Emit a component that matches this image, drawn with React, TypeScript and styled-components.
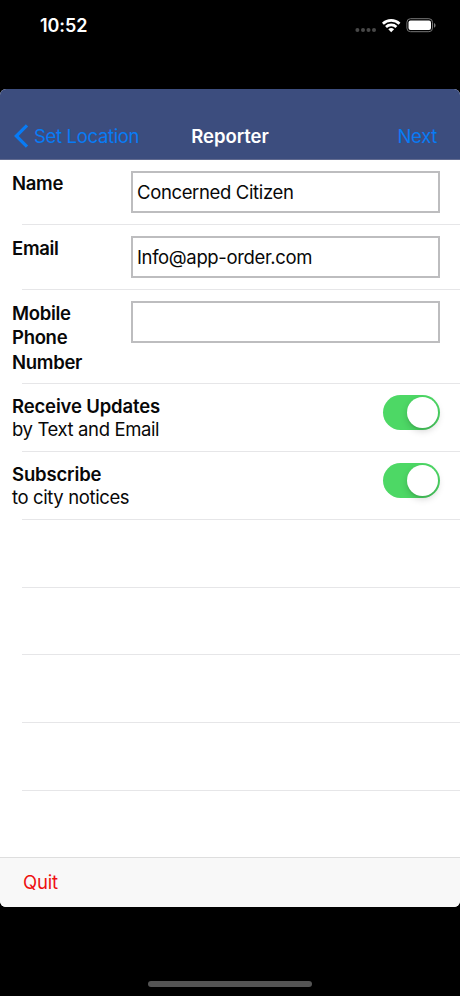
import React from "react";
import styled, { createGlobalStyle } from "styled-components";

const GlobalStyle = createGlobalStyle`
  * { box-sizing: border-box; }
  body {
    margin: 0;
    background: #000;
    font-family: Inter, "Liberation Sans", sans-serif;
    color: #080808;
  }
  button, input { font: inherit; color: inherit; padding: 0; margin: 0; border: 0; background: none; }
`;

const Screen = styled.div`
  height: 996px;
  display: flex;
  flex-direction: column;
  background: #000;
  overflow: hidden;
`;

const StatusBar = styled.header`
  height: 89px;
  padding: 15px 24px 0 40px;
  display: flex;
  align-items: flex-start;
  justify-content: space-between;
  color: #fff;
`;

const Clock = styled.time`
  font-size: 18px;
  line-height: 22px;
  font-weight: 600;
  letter-spacing: -0.1px;
`;

const Panel = styled.main`
  height: 818px;
  display: flex;
  flex-direction: column;
  background: #fff;
  border-radius: 6px;
  overflow: hidden;
`;

const NavBar = styled.nav`
  height: 71px;
  padding: 35px 14px 0;
  display: grid;
  grid-template-columns: 1fr auto 1fr;
  align-items: start;
  background: #3c4d7e;
  border-bottom: 1px solid #626b90;
  line-height: 24px;
`;

const NavButton = styled.button<{ $end?: boolean }>`
  display: flex;
  align-items: center;
  justify-self: ${(p) => (p.$end ? "end" : "start")};
  margin-right: ${(p) => (p.$end ? "9px" : "0")};
  gap: 5px;
  color: #087bf5;
  font-size: 18.5px;
  line-height: 24px;
  letter-spacing: -0.33px;
`;

const Title = styled.h1`
  margin: 0;
  color: #fff;
  font-size: 18.5px;
  line-height: 24px;
  font-weight: 600;
  letter-spacing: -0.05px;
`;

const Row = styled.div<{ $height: number }>`
  height: ${(p) => p.$height}px;
  padding: 11px 20px 0 12px;
  display: flex;
  align-items: flex-start;
  justify-content: space-between;
  background: linear-gradient(#e6e6e8, #e6e6e8) 22px 100% / 100% 1px no-repeat;
`;

const FieldLabel = styled.label`
  width: 95px;
  font-size: 18.5px;
  line-height: 24.3px;
  font-weight: 600;
  letter-spacing: -0.3px;
`;

const Field = styled.input`
  width: 309px;
  height: 42px;
  padding: 0 4px 1px;
  border: 2px solid #bdbdbf;
  border-radius: 0;
  background: #fff;
  font-size: 18.5px;
  letter-spacing: -0.36px;
  outline: none;
`;

const Caption = styled.div`
  font-size: 18.5px;
  line-height: 23px;
  letter-spacing: -0.38px;
`;

const CaptionTitle = styled.div`
  font-weight: 600;
  letter-spacing: -0.15px;
`;

const Toggle = styled.button`
  width: 57px;
  height: 35px;
  padding: 2px;
  display: flex;
  justify-content: flex-end;
  border-radius: 18px;
  background: #4dd865;
`;

const Knob = styled.span`
  width: 31px;
  height: 31px;
  border-radius: 50%;
  background: #fff;
  box-shadow: 0 3px 7px rgba(0, 0, 0, 0.17), 0 2px 1px rgba(0, 0, 0, 0.06);
`;

const Footer = styled.footer`
  height: 50px;
  margin-top: auto;
  padding: 0 23px 2px;
  display: flex;
  align-items: center;
  background: #f8f8f8;
  border-top: 1px solid #dedede;
`;

const QuitButton = styled.button`
  color: #ee1010;
  font-size: 18.5px;
  line-height: 24px;
  letter-spacing: -0.2px;
`;

const HomeArea = styled.div`
  flex: 1;
  display: flex;
  justify-content: center;
  padding-top: 74px;
`;

const HomeIndicator = styled.div`
  width: 164px;
  height: 6px;
  border-radius: 3px;
  background: #545454;
`;

const StatusIcons = () => (
  <svg width="82" height="24" viewBox="0 0 82 24" fill="none" aria-hidden="true">
    <g fill="#484848">
      <circle cx="3.4" cy="15" r="2" />
      <circle cx="9" cy="15" r="2" />
      <circle cx="14.5" cy="15" r="2" />
      <circle cx="20" cy="15" r="2" />
    </g>
    <g stroke="#fff" strokeWidth="2.7">
      <path d="M28.9 8.7a12 12 0 0 1 16.6 0" />
      <path d="M32 12a7.5 7.5 0 0 1 10.4 0" />
    </g>
    <path d="M34.3 14.2a4.3 4.3 0 0 1 5.8 0L37.2 17.2z" fill="#fff" />
    <rect x="52.9" y="3.7" width="25.6" height="13" rx="3.6" stroke="#777" />
    <rect x="54.5" y="5.4" width="22.5" height="9.7" rx="2" fill="#fff" />
    <path d="M80 7.9c2.1.7 2.1 4.1 0 4.8z" fill="#777" />
  </svg>
);

const BackChevron = () => (
  <svg width="15" height="24" viewBox="0 0 15 24" fill="none" aria-hidden="true">
    <path d="M13 1.3 2.3 12 13 22.7" stroke="#087bf5" strokeWidth="3.2" />
  </svg>
);

const fields = [
  { id: "name", label: "Name", value: "Concerned Citizen", height: 65 },
  { id: "email", label: "Email", value: "Info@app-order.com", height: 65 },
  { id: "phone", label: "Mobile Phone Number", value: "", height: 94 },
];

const options = [
  { title: "Receive Updates", detail: "by Text and Email" },
  { title: "Subscribe", detail: "to city notices" },
];

export default function App() {
  return (
    <>
      <GlobalStyle />
      <Screen>
        <StatusBar>
          <Clock>10:52</Clock>
          <StatusIcons />
        </StatusBar>
        <Panel>
          <NavBar>
            <NavButton>
              <BackChevron />
              Set Location
            </NavButton>
            <Title>Reporter</Title>
            <NavButton $end>Next</NavButton>
          </NavBar>
          {fields.map((f) => (
            <Row key={f.id} $height={f.height}>
              <FieldLabel htmlFor={f.id}>{f.label}</FieldLabel>
              <Field id={f.id} defaultValue={f.value} />
            </Row>
          ))}
          {options.map((o) => (
            <Row key={o.title} $height={68}>
              <Caption>
                <CaptionTitle>{o.title}</CaptionTitle>
                <div>{o.detail}</div>
              </Caption>
              <Toggle role="switch" aria-checked="true" aria-label={o.title}>
                <Knob />
              </Toggle>
            </Row>
          ))}
          {[68, 67, 68, 68].map((height, i) => (
            <Row key={i} $height={height} />
          ))}
          <Footer>
            <QuitButton>Quit</QuitButton>
          </Footer>
        </Panel>
        <HomeArea>
          <HomeIndicator />
        </HomeArea>
      </Screen>
    </>
  );
}
